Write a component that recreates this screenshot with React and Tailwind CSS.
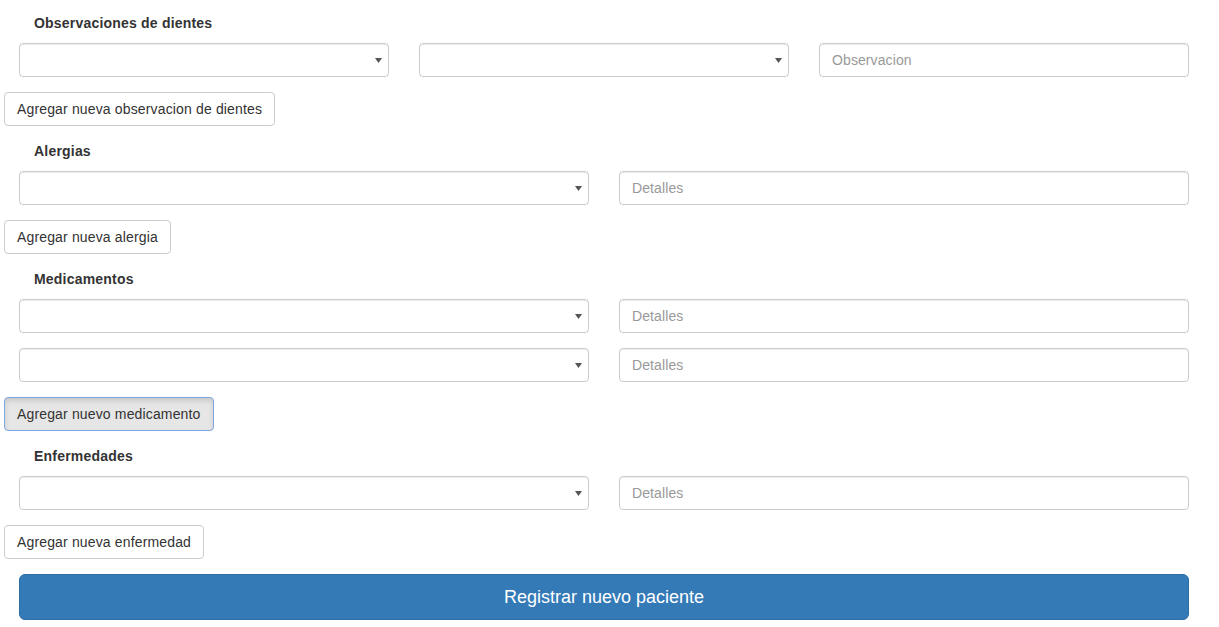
import { useState } from "react";

const font = { fontFamily: '"Liberation Sans", Arial, sans-serif' };

function Select() {
  return (
    <div className="relative h-[34px] w-full rounded-[4px] border border-[#ccc] bg-white shadow-[inset_0_1px_1px_rgba(0,0,0,0.075)]">
      <svg
        className="absolute right-[6px] top-[14px]"
        width="7"
        height="5"
        viewBox="0 0 7 5"
      >
        <path d="M0 0 L7 0 L3.5 5 Z" fill="#555" />
      </svg>
    </div>
  );
}

function Input({ placeholder }) {
  return (
    <input
      placeholder={placeholder}
      className="h-[34px] w-full rounded-[4px] border border-[#ccc] bg-white px-3 text-[14px] tracking-[0.1px] text-[#555] placeholder:text-[#999] shadow-[inset_0_1px_1px_rgba(0,0,0,0.075)] outline-none"
    />
  );
}

function Heading({ children }) {
  return (
    <div className="pl-[30px] text-[14px] font-bold leading-5 tracking-[0.2px] text-[#333]">
      {children}
    </div>
  );
}

function AddButton({ children, active }) {
  return (
    <button
      className={
        active
          ? "h-[34px] rounded-[4px] border border-[#7ea6e0] bg-[#e6e6e6] px-3 text-[14px] tracking-[0.15px] text-[#333] shadow-[inset_0_3px_5px_rgba(0,0,0,0.125)]"
          : "h-[34px] rounded-[4px] border border-[#ccc] bg-white px-3 text-[14px] tracking-[0.15px] text-[#333]"
      }
    >
      {children}
    </button>
  );
}

export default function App() {
  const [meds] = useState([0, 1]);

  return (
    <div className="w-[1219px] bg-white pl-[4px] pt-[13px]" style={font}>
      {/* dientes */}
      <Heading>Observaciones de dientes</Heading>
      <div className="ml-[15px] mt-[10px] grid w-[1170px] grid-cols-3 gap-[30px]">
        <Select />
        <Select />
        <Input placeholder="Observacion" />
      </div>
      <div className="mt-[15px]">
        <AddButton>Agregar nueva observacion de dientes</AddButton>
      </div>

      {/* alergias */}
      <div className="mt-[15px]">
        <Heading>Alergias</Heading>
      </div>
      <div className="ml-[15px] mt-[10px] grid w-[1170px] grid-cols-2 gap-[30px]">
        <Select />
        <Input placeholder="Detalles" />
      </div>
      <div className="mt-[15px]">
        <AddButton>Agregar nueva alergia</AddButton>
      </div>

      {/* medicamentos */}
      <div className="mt-[15px]">
        <Heading>Medicamentos</Heading>
      </div>
      <div className="ml-[15px] mt-[10px] flex w-[1170px] flex-col gap-[15px]">
        {meds.map((m) => (
          <div key={m} className="grid grid-cols-2 gap-[30px]">
            <Select />
            <Input placeholder="Detalles" />
          </div>
        ))}
      </div>
      <div className="mt-[15px]">
        <AddButton active>Agregar nuevo medicamento</AddButton>
      </div>

      {/* enfermedades */}
      <div className="mt-[15px]">
        <Heading>Enfermedades</Heading>
      </div>
      <div className="ml-[15px] mt-[10px] grid w-[1170px] grid-cols-2 gap-[30px]">
        <Select />
        <Input placeholder="Detalles" />
      </div>
      <div className="mt-[15px]">
        <AddButton>Agregar nueva enfermedad</AddButton>
      </div>

      <button className="ml-[15px] mt-[15px] h-[46px] w-[1170px] rounded-[6px] border border-[#2e6da4] bg-[#337ab7] text-[18px] text-white">
        Registrar nuevo paciente
      </button>
    </div>
  );
}
